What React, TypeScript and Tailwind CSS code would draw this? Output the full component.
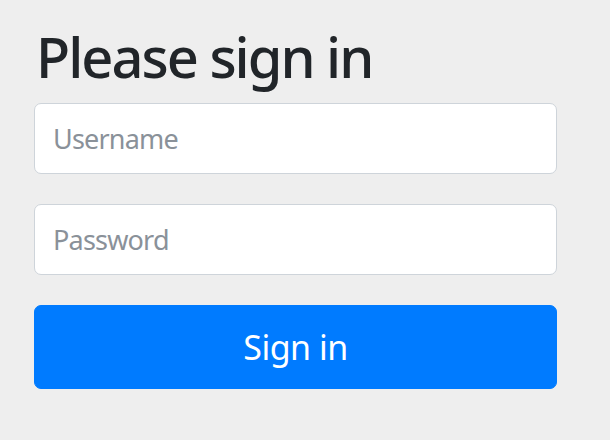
import React from "react";

export default function App() {
  return (
    <div
      className="min-h-[440px] w-full bg-[#eeeeee] px-[34px]"
      style={{ fontFamily: '"Noto Sans", "Open Sans", sans-serif' }}
    >
      <form className="flex w-[523px] flex-col pt-[21px]" onSubmit={(e) => e.preventDefault()}>
        <h2 className="mb-[12px] pl-[2px] text-[56px] leading-[70px] font-medium tracking-[-2px] text-[#212529]">
          Please sign in
        </h2>
        <input
          type="text"
          placeholder="Username"
          className="h-[71px] w-full rounded-[7px] border border-[#ced4da] bg-white px-[18px] text-[27px] tracking-[-0.8px] text-[#495057] outline-none placeholder:text-[#8a9199]"
        />
        <input
          type="password"
          placeholder="Password"
          className="mt-[30px] h-[71px] w-full rounded-[7px] border border-[#ced4da] bg-white px-[18px] text-[27px] tracking-[-0.8px] text-[#495057] outline-none placeholder:text-[#8a9199]"
        />
        <button
          type="submit"
          className="mt-[30px] h-[84px] w-full rounded-[7px] border border-[#007bff] bg-[#007bff] text-[34px] tracking-[-0.5px] text-white"
        >
          Sign in
        </button>
      </form>
    </div>
  );
}
